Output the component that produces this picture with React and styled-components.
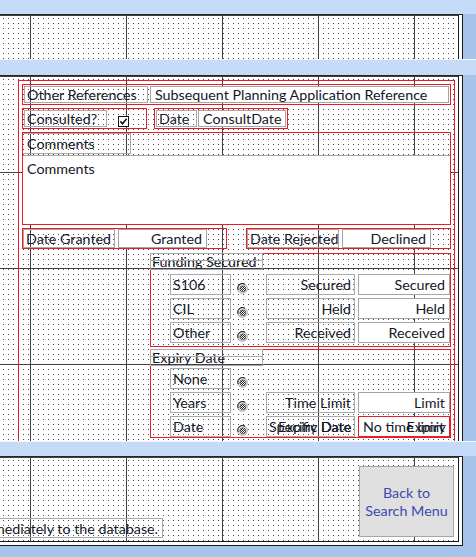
import React, { useId } from "react";
import styled, { createGlobalStyle } from "styled-components";

const GlobalStyle = createGlobalStyle`
  html, body {
    margin: 0;
    padding: 0;
  }
  body {
    background: #a7c4ea;
    overflow: hidden;
    font-family: Lato, "Open Sans", sans-serif;
  }
`;

const RED = "#ec1c24";
const INK = "#141828";
const FONT = "14.3px";

const Page = styled.div`
  width: 476px;
  height: 557px;
  display: flex;
  flex-direction: column;
`;

const SectionBar = styled.div`
  flex-shrink: 0;
  height: ${(p) => p.$h}px;
  background: #c5dbf8;
  border-top: ${(p) => (p.$first ? "none" : "1px solid #f2f7fe")};
`;

const SectionFrame = styled.div`
  flex-shrink: 0;
  width: 463px;
  box-sizing: border-box;
  background: #fff;
  border-top: 1px solid #262626;
  border-right: 1px solid #1a1a1a;
  ${(p) => p.$last && "padding-bottom: 3px; border-bottom: 1px solid #1a1a1a;"}
`;

const Canvas = styled.div`
  width: 459px;
  height: ${(p) => p.$h}px;
  box-sizing: border-box;
  border-right: 1px solid #1a1a1a;
  ${(p) => p.$last && "border-bottom: 1px solid #1a1a1a;"}
  overflow: hidden;
  background-color: #fff;
  background-image: linear-gradient(to right, #404040 1px, transparent 1px),
    linear-gradient(to bottom, #404040 1px, transparent 1px),
    conic-gradient(at 1px 1px, transparent 75%, #4a4a4a 0);
  background-size: 96px 100%, 100% 96px, 5px 5px;
  background-position: 30px 0, 0 0, 33px 3px;
`;

/* detail section */

const DetailBody = styled(Canvas)`
  padding: 4px 0 0 18px;
`;

const OuterFrame = styled.div`
  box-sizing: border-box;
  width: 437px;
  border: 1px solid ${RED};
  padding: 3px;
  display: flex;
  flex-direction: column;
`;

const RedBox = styled.div`
  box-sizing: border-box;
  flex-shrink: 0;
  width: ${(p) => (p.$w ? `${p.$w}px` : "auto")};
  height: 21px;
  border: 1px solid ${RED};
  padding: ${(p) => p.$pad ?? 0}px;
  margin-top: ${(p) => p.$mt ?? 0}px;
  display: flex;
  align-items: ${(p) => (p.$center ? "center" : "stretch")};
  gap: ${(p) => p.$gap ?? 0}px;
`;

const Label = styled.div`
  box-sizing: border-box;
  flex-shrink: 0;
  width: ${(p) => p.$w}px;
  height: ${(p) => (p.$h ? `${p.$h}px` : "auto")};
  border: 1px solid #a9a9a9;
  padding: ${(p) => (p.$right ? "0 3px 0 0" : "0 0 0 2px")};
  display: flex;
  align-items: center;
  justify-content: ${(p) => (p.$right ? "flex-end" : "flex-start")};
  font-size: ${FONT};
  color: ${INK};
  white-space: nowrap;
  overflow: hidden;
  position: relative;
`;

const TextBox = styled.div`
  box-sizing: border-box;
  flex: ${(p) => (p.$w ? "0 0 auto" : "1 1 auto")};
  width: ${(p) => (p.$w ? `${p.$w}px` : "auto")};
  height: ${(p) => (p.$h ? `${p.$h}px` : "auto")};
  background: #fff;
  border: 1px solid ${(p) => (p.$red ? RED : "#a5a5a5")};
  padding: ${(p) => (p.$right ? "0 4px 0 0" : "0 0 0 4px")};
  display: flex;
  align-items: center;
  justify-content: ${(p) => (p.$right ? "flex-end" : "flex-start")};
  font-size: ${FONT};
  color: ${INK};
  white-space: nowrap;
  overflow: hidden;
  position: relative;
`;

const Overlay = styled.span`
  position: absolute;
  top: 0;
  bottom: 0;
  display: flex;
  align-items: center;
  ${(p) => (p.$right ? "right: 3px;" : `left: ${p.$inset ?? 2}px;`)}
`;

const ControlRow = styled.div`
  display: flex;
  gap: ${(p) => p.$gap}px;
  margin-top: ${(p) => p.$mt ?? 0}px;
`;

const CheckCell = styled.div`
  flex: 1;
  padding: 1px 0 0 11px;
`;

const CommentsGroup = styled.div`
  box-sizing: border-box;
  height: 93px;
  margin-top: 3px;
  border: 1px solid ${RED};
  display: flex;
  flex-direction: column;
  gap: 1px;
`;

const CommentsLabel = styled(Label)`
  height: 21px;
  border-color: #a9a9a9 #a9a9a9 #a9a9a9 transparent;
  padding-left: 3px;
`;

const CommentsBox = styled.div`
  flex: 1;
  background: #fff;
  border-top: 1px solid #a5a5a5;
  padding: 4px 0 0 4px;
  font-size: ${FONT};
  line-height: 17px;
  color: ${INK};
`;

const OptionGroup = styled.div`
  box-sizing: border-box;
  width: 301px;
  margin: ${(p) => p.$mt}px 0 0 128px;
  border: 1px solid ${RED};
  padding-bottom: ${(p) => p.$pb}px;
  flex-shrink: 0;
`;

const GroupCaption = styled.div`
  box-sizing: border-box;
  width: 113px;
  height: 17px;
  margin: -1px 0 0 -1px;
  border: 1px solid #a9a9a9;
  padding-left: 1px;
  font-size: ${FONT};
  line-height: 15px;
  color: ${INK};
  white-space: nowrap;
  position: relative;

  &::after {
    content: "";
    position: absolute;
    left: 0;
    right: 0;
    top: 6px;
    border-top: 1px solid #a9a9a9;
  }
`;

const OptionRows = styled.div`
  display: flex;
  flex-direction: column;
  gap: 3px;
  margin-top: ${(p) => p.$mt}px;
  padding-left: 19px;
`;

const OptionRow = styled.div`
  display: flex;
  height: 21px;
`;

const RadioCell = styled.div`
  width: 11px;
  margin: 4px 18px 0 6px;
  flex-shrink: 0;
`;

const ValuePair = styled.div`
  flex: 1;
  display: flex;
  gap: 3px;
`;

/* footer */

const FooterBody = styled(Canvas)`
  display: flex;
  align-items: flex-start;
`;

const NoteWrap = styled.div`
  width: 163px;
  flex-shrink: 0;
  display: flex;
  justify-content: flex-end;
  margin-top: 61px;
`;

const Note = styled(Label)`
  width: auto;
  height: 20px;
  padding: 0 4px 0 2px;
`;

const MenuButton = styled.div`
  box-sizing: border-box;
  width: 95px;
  height: 71px;
  margin: 9px 4px 0 auto;
  background: #e0e0e0;
  border: 1px solid #a6a6a6;
  display: flex;
  flex-direction: column;
  align-items: center;
  justify-content: center;
  font-size: ${FONT};
  line-height: 18px;
  color: #3d49b0;
`;

const CheckBox = () => (
  <svg width="11" height="11" viewBox="0 0 11 11">
    <rect x="0.5" y="0.5" width="10" height="10" fill="#fff" stroke="#111" />
    <path d="M2.4 5.4 L4.5 7.7 L8.6 2.7" fill="none" stroke="#111" strokeWidth="1.6" />
  </svg>
);

const Radio = () => {
  const id = useId().replace(/:/g, "");
  return (
    <svg width="11" height="11" viewBox="0 0 11 11">
      <defs>
        <pattern id={id} width="2" height="2" patternUnits="userSpaceOnUse">
          <rect width="2" height="2" fill="#fff" />
          <rect width="1" height="1" fill="#222" />
          <rect x="1" y="1" width="1" height="1" fill="#222" />
        </pattern>
      </defs>
      <circle cx="5.5" cy="5.5" r="4.8" fill="#f4f4f4" stroke="#a0a0a0" />
      <path d="M1.2 7 A4.6 4.6 0 0 1 8 1.4" fill="none" stroke="#2a2a2a" strokeWidth="1.1" />
      <circle cx="5.8" cy="5.8" r="3" fill={`url(#${id})`} stroke="#444" strokeWidth="0.7" />
    </svg>
  );
};

const funding = [
  { key: "S106", label: "Secured", value: "Secured" },
  { key: "CIL", label: "Held", value: "Held" },
  { key: "Other", label: "Received", value: "Received" },
];

export default function App() {
  return (
    <>
      <GlobalStyle />
      <Page>
        <SectionBar $h={14} $first />
        <SectionFrame>
          <Canvas $h={44} />
        </SectionFrame>

        <SectionBar $h={15} />
        <SectionFrame>
          <DetailBody $h={365}>
            <OuterFrame>
              <RedBox $pad={1} $gap={2}>
                <Label $w={124}>Other References</Label>
                <TextBox>Subsequent Planning Application Reference</TextBox>
              </RedBox>

              <ControlRow $gap={7} $mt={3}>
                <RedBox $w={125} $pad={1}>
                  <Label $w={83}>Consulted?</Label>
                  <CheckCell>
                    <CheckBox />
                  </CheckCell>
                </RedBox>
                <RedBox $w={134} $pad={1} $gap={1}>
                  <Label $w={41}>Date</Label>
                  <TextBox>ConsultDate</TextBox>
                </RedBox>
              </ControlRow>

              <CommentsGroup>
                <CommentsLabel $w={108}>Comments</CommentsLabel>
                <CommentsBox>Comments</CommentsBox>
              </CommentsGroup>

              <ControlRow $gap={19} $mt={3}>
                <RedBox $w={205} $gap={3} $center>
                  <Label $w={92} $h={19}>
                    Date Granted
                  </Label>
                  <TextBox $w={89} $h={19} $right>
                    Granted
                  </TextBox>
                </RedBox>
                <RedBox $w={205} $gap={3} $center>
                  <Label $w={92} $h={19}>
                    Date Rejected
                  </Label>
                  <TextBox $w={89} $h={19} $right>
                    Declined
                  </TextBox>
                </RedBox>
              </ControlRow>

              <OptionGroup $mt={4} $pb={3}>
                <GroupCaption>Funding Secured</GroupCaption>
                <OptionRows $mt={4}>
                  {funding.map((f) => (
                    <OptionRow key={f.key}>
                      <Label $w={61}>{f.key}</Label>
                      <RadioCell>
                        <Radio />
                      </RadioCell>
                      <ValuePair>
                        <Label $w={89} $right>
                          {f.label}
                        </Label>
                        <TextBox $right>{f.value}</TextBox>
                      </ValuePair>
                    </OptionRow>
                  ))}
                </OptionRows>
              </OptionGroup>

              <OptionGroup $mt={2} $pb={0}>
                <GroupCaption>Expiry Date</GroupCaption>
                <OptionRows $mt={2}>
                  <OptionRow>
                    <Label $w={61}>None</Label>
                    <RadioCell>
                      <Radio />
                    </RadioCell>
                  </OptionRow>
                  <OptionRow>
                    <Label $w={61}>Years</Label>
                    <RadioCell>
                      <Radio />
                    </RadioCell>
                    <ValuePair>
                      <Label $w={89} $right>
                        Time Limit
                      </Label>
                      <TextBox $right>Limit</TextBox>
                    </ValuePair>
                  </OptionRow>
                  <OptionRow>
                    <Label $w={61}>Date</Label>
                    <RadioCell>
                      <Radio />
                    </RadioCell>
                    <ValuePair>
                      <Label $w={89}>
                        <Overlay>Specific Date</Overlay>
                        <Overlay $right>Expiry Date</Overlay>
                      </Label>
                      <TextBox $red>
                        <Overlay $inset={4}>No time limit</Overlay>
                        <Overlay $right>Expiry</Overlay>
                      </TextBox>
                    </ValuePair>
                  </OptionRow>
                </OptionRows>
              </OptionGroup>
            </OuterFrame>
          </DetailBody>
        </SectionFrame>

        <SectionBar $h={14} />
        <SectionFrame $last>
          <FooterBody $h={85} $last>
            <NoteWrap>
              <Note>Any changes are saved immediately to the database.</Note>
            </NoteWrap>
            <MenuButton>
              <span>Back to</span>
              <span>Search Menu</span>
            </MenuButton>
          </FooterBody>
        </SectionFrame>
      </Page>
    </>
  );
}
